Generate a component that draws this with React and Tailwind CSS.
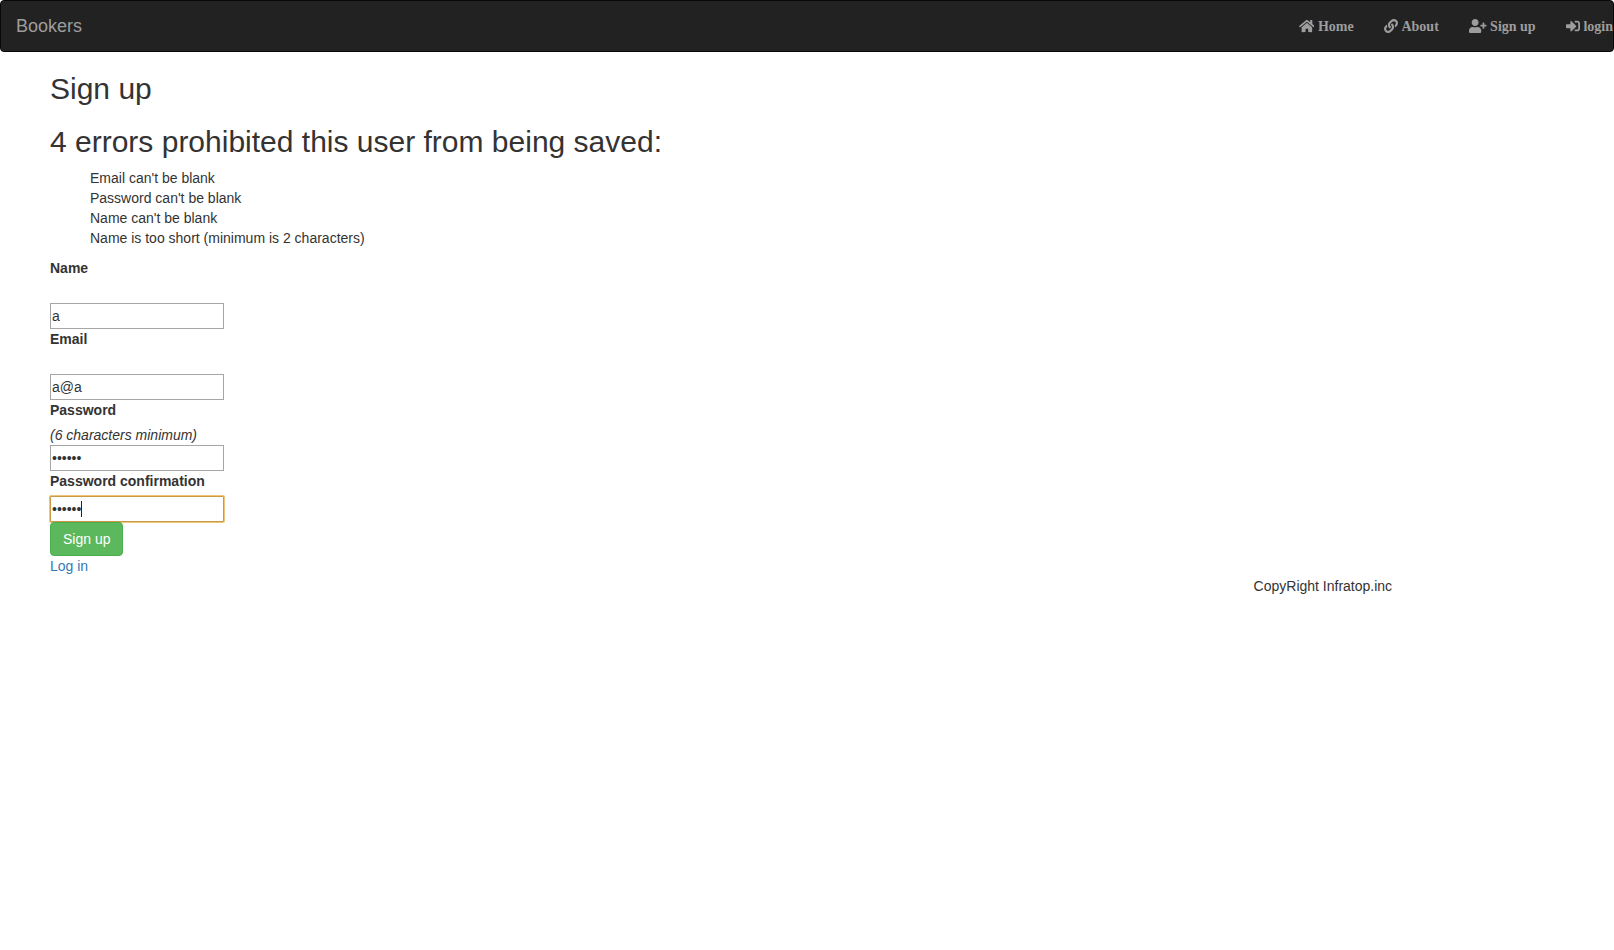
import { FaHome, FaLink, FaUserPlus, FaSignInAlt } from "react-icons/fa";

const errors = [
  "Email can't be blank",
  "Password can't be blank",
  "Name can't be blank",
  "Name is too short (minimum is 2 characters)",
];

const links = [
  { Icon: FaHome, label: "Home", width: "w-[15.75px]" },
  { Icon: FaLink, label: "About", width: "w-[14px]" },
  { Icon: FaUserPlus, label: "Sign up", width: "w-[17.5px]" },
  { Icon: FaSignInAlt, label: "login", width: "w-[14px]" },
];

const inputClass =
  "block h-[26px] w-[174px] border bg-white px-px py-0 text-[14px] leading-5 outline-none";

function Label({ children }) {
  return <label className="mb-[5px] block h-5 font-bold">{children}</label>;
}

export default function App() {
  return (
    <div className="min-h-[950px] overflow-hidden bg-white font-['Liberation_Sans',Arial,sans-serif] text-[14px] leading-5 text-[#333]">
      <nav className="flex h-[52px] justify-between rounded border border-[#080808] bg-[#222] text-[#9d9d9d]">
        <a className="p-[15px] text-[18px] leading-5">Bookers</a>
        <ul className="flex">
          {links.map(({ Icon, label, width }) => (
            <li key={label} className="flex items-center pl-[30.2px] font-['Liberation_Serif',serif] font-bold leading-5">
              <Icon className={`mr-[3.6px] h-[14px] ${width}`} />
              <span className="pt-[2px]">{label}</span>
            </li>
          ))}
        </ul>
      </nav>
      <main className="pl-[50px]">
        <h2 className="mt-5 mb-[10px] h-[33px] text-[30px] leading-[33px]">Sign up</h2>
        <h2 className="mt-5 mb-[10px] h-[33px] text-[30px] leading-[33px]">
          4 errors prohibited this user from being saved:
        </h2>
        <ul className="mb-[10px] pl-10">
          {errors.map((e) => (
            <li key={e}>{e}</li>
          ))}
        </ul>
        <Label>Name</Label>
        <input className={`${inputClass} mt-[25px] border-[#a6a6a6]`} defaultValue="a" />
        <Label>Email</Label>
        <input className={`${inputClass} mt-[25px] border-[#a6a6a6]`} defaultValue="a@a" />
        <Label>Password</Label>
        <em className="block h-5">(6 characters minimum)</em>
        <input className={`${inputClass} border-[#a6a6a6]`} type="password" defaultValue="aaaaaa" />
        <Label>Password confirmation</Label>
        <div className="relative w-[174px]">
          <input
            className={`${inputClass} rounded-[1px] border-[#c99a45] shadow-[0_0_0_1px_#efc57c]`}
            type="password"
            defaultValue="aaaaaa"
          />
          <span className="absolute top-[5px] left-[31px] h-4 w-px bg-[#222]" />
        </div>
        <button className="relative block h-[34px] rounded border border-[#4cae4c] bg-[#5cb85c] px-3 text-white">Sign up</button>
        <a className="block text-[#337ab7]">Log in</a>
      </main>
      <footer className="pl-[1253.6px]">CopyRight Infratop.inc</footer>
    </div>
  );
}
